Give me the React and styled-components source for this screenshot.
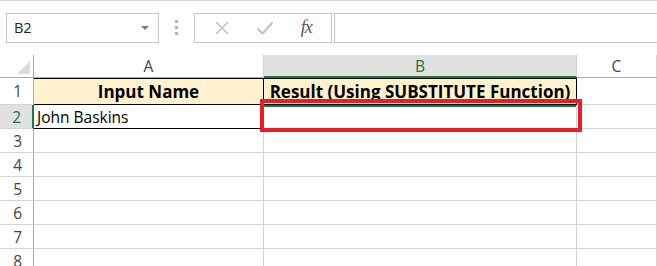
import React from 'react';
import styled, { createGlobalStyle } from 'styled-components';

const GlobalStyle = createGlobalStyle`
    body {
        margin: 0;
        background: #ffffff;
        font-family: 'Open Sans', 'Liberation Sans', sans-serif;
    }
`

const Page = styled.div`
    position: relative;
    width: 657px;
    height: 266px;
    overflow: hidden;
    background: #ffffff;
`

const FormulaBar = styled.div`
    display: flex;
    align-items: center;
    height: 54px;
    border-top: 1px solid #d4d4d4;
    padding-left: 6px;
    box-sizing: border-box;
    background: #ffffff;
`

const NameBox = styled.div`
    display: flex;
    align-items: center;
    justify-content: space-between;
    width: 153px;
    height: 30px;
    box-sizing: border-box;
    border: 1px solid #c6c6c6;
    background: #fdfdfd;
    padding: 0 9px 0 7px;
    font-size: 14.5px;
    color: #262626;
`

const Caret = styled.span`
    width: 0;
    height: 0;
    border-left: 4px solid transparent;
    border-right: 4px solid transparent;
    border-top: 4px solid #777777;
`

const Grip = styled.div`
    display: flex;
    flex-direction: column;
    gap: 3px;
    margin: 0 16px 0 16px;
`

const GripDot = styled.span`
    width: 3px;
    height: 3px;
    background: #b4b4b4;
`

const FxBox = styled.div`
    display: flex;
    align-items: center;
    justify-content: space-around;
    width: 138px;
    height: 30px;
    box-sizing: border-box;
    border: 1px solid #c6c6c6;
    background: #fdfdfd;
    padding: 0 6px;
`

const FxLabel = styled.span`
    font-family: 'Liberation Serif', 'Times New Roman', serif;
    font-style: italic;
    font-size: 18px;
    color: #5a5a5a;
    letter-spacing: -1px;
`

const FormulaInput = styled.div`
    flex: 1;
    height: 30px;
    margin-left: 2px;
    box-sizing: border-box;
    border: 1px solid #c6c6c6;
    border-right: none;
    background: #fdfdfd;
`

const Sheet = styled.div`
    display: grid;
    grid-template-columns: 34px 230px 313px 80px;
    grid-template-rows: 23px 27px repeat(7, 24px);
    margin-top: 1px;
`

const Corner = styled.div`
    border-right: 1px solid #ababab;
    border-bottom: 1px solid #ababab;
    position: relative;
    &::after {
        content: '';
        position: absolute;
        right: 3px;
        bottom: 3px;
        width: 0;
        height: 0;
        border-left: 13px solid transparent;
        border-bottom: 13px solid #dcdcdc;
    }
`

const ColHead = styled.div`
    display: flex;
    align-items: center;
    justify-content: center;
    box-sizing: border-box;
    font-size: 15.5px;
    color: ${p => (p.$active ? '#217346' : '#444444')};
    background: ${p => (p.$active ? '#e1e1e1' : '#ffffff')};
    border-right: 1px solid #d4d4d4;
    border-bottom: ${p => (p.$active ? '2px solid #217346' : '1px solid #ababab')};
`

const RowHead = styled.div`
    display: flex;
    align-items: center;
    justify-content: flex-end;
    padding-right: 11px;
    box-sizing: border-box;
    font-size: 15.5px;
    color: ${p => (p.$active ? '#217346' : '#444444')};
    background: ${p => (p.$active ? '#e1e1e1' : '#ffffff')};
    border-right: ${p => (p.$active ? '2px solid #217346' : '1px solid #ababab')};
    border-bottom: 1px solid #d4d4d4;
`

const Cell = styled.div`
    display: flex;
    align-items: center;
    justify-content: ${p => (p.$title ? 'center' : 'flex-start')};
    box-sizing: border-box;
    padding: 0 3px;
    white-space: nowrap;
    overflow: visible;
    font-size: ${p => (p.$title ? '17px' : '15.5px')};
    font-weight: ${p => (p.$title ? 700 : 400)};
    color: #000000;
    background: ${p => (p.$title ? '#fff2cc' : '#ffffff')};
    border-right: 1px solid ${p => (p.$edge ? '#000000' : '#d4d4d4')};
    border-bottom: 1px solid ${p => (p.$edge ? '#000000' : '#d4d4d4')};
    border-top: ${p => (p.$title ? '1px solid #000000' : 'none')};
    box-shadow: ${p => (p.$selected ? 'inset 0 2px 0 #217346' : 'none')};
`

const Highlight = styled.div`
    position: absolute;
    left: 260px;
    top: 99px;
    width: 322px;
    height: 33px;
    box-sizing: border-box;
    border: 4px solid #ea1c24;
    pointer-events: none;
`

const CrossIcon = () => (
    <svg width="16" height="16" viewBox="0 0 16 16">
        <path d="M2 2 L14 14 M14 2 L2 14" stroke="#c4c4c4" strokeWidth="1.6" fill="none" />
    </svg>
)

const CheckIcon = () => (
    <svg width="18" height="16" viewBox="0 0 18 16">
        <path d="M1.5 8.5 L6.5 13.5 L16.5 2.5" stroke="#c4c4c4" strokeWidth="2.2" fill="none" />
    </svg>
)

const rows = [3, 4, 5, 6, 7, 8]

const App = () => {
    return (
        <Page>
            <GlobalStyle />
            <FormulaBar>
                <NameBox>
                    <span>B2</span>
                    <Caret />
                </NameBox>
                <Grip>
                    <GripDot />
                    <GripDot />
                    <GripDot />
                </Grip>
                <FxBox>
                    <CrossIcon />
                    <CheckIcon />
                    <FxLabel>fx</FxLabel>
                </FxBox>
                <FormulaInput />
            </FormulaBar>

            <Sheet>
                <Corner />
                <ColHead>A</ColHead>
                <ColHead $active>B</ColHead>
                <ColHead>C</ColHead>

                <RowHead>1</RowHead>
                <Cell $title $edge>Input Name</Cell>
                <Cell $title $edge>Result (Using SUBSTITUTE Function)</Cell>
                <Cell />

                <RowHead $active>2</RowHead>
                <Cell $edge>John Baskins</Cell>
                <Cell $selected />
                <Cell />

                {rows.map(r => (
                    <React.Fragment key={r}>
                        <RowHead>{r}</RowHead>
                        <Cell />
                        <Cell />
                        <Cell />
                    </React.Fragment>
                ))}
            </Sheet>

            <Highlight />
        </Page>
    );
};

export default App;
